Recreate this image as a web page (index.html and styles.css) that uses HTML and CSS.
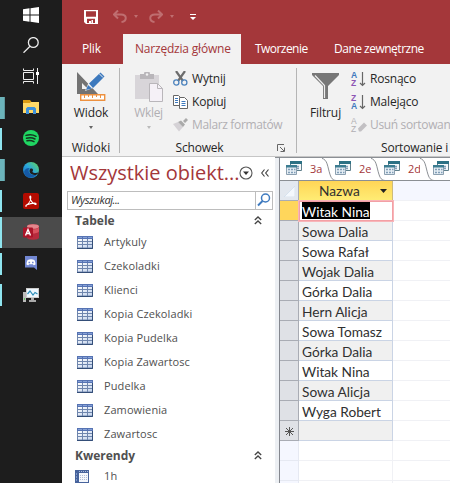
FILE: index.html
```html
<!DOCTYPE html>
<html lang="pl">
<head>
<meta charset="utf-8">
<title>Access</title>
<link rel="stylesheet" href="styles.css">
</head>
<body>
<svg width="0" height="0" class="defs">
  <defs>
    <linearGradient id="tg" x1="0" y1="0" x2="1" y2="1"><stop offset="0" stop-color="#fff"/><stop offset="1" stop-color="#c3d3ec"/></linearGradient>
    <linearGradient id="eg" x1="0" y1="1" x2="1" y2="0"><stop offset="0" stop-color="#1267b8"/><stop offset=".5" stop-color="#2ba6dd"/><stop offset="1" stop-color="#66dc55"/></linearGradient>
    <symbol id="table" viewBox="0 0 16 13"><rect width="16" height="13" fill="#6f86ae"/><rect width="16" height="3" fill="#5673b3"/><path d="M1 1.500h4M6 1.500h4M11 1.500h4" stroke="#86a1d6"/><path d="M1 3h4v2H1zM6 3h4v2H6zM11 3h4v2h-4zM1 6h4v2H1zM6 6h4v2H6zM11 6h4v2h-4zM1 9h4v2.500H1zM6 9h4v2.500H6zM11 9h4v2.500h-4z" fill="url(#tg)"/><path d="M0 12.500h15.500V3" fill="none" stroke="#344e78"/></symbol>
    <symbol id="query" viewBox="0 0 16 15"><path d="M4.500 .5h11v9h-11z" fill="#f4f8fa" stroke="#60808c"/><path d="M4 0h12v3H4z" fill="#2c7184"/><path d="M11 5.500h2M11 7.500h2" stroke="#819eb7" stroke-width="1.300"/><path d="M.5 4.500h10v9H.5z" fill="#e6eef4" stroke="#8ca0b0"/><path d="M0 4h11v2.500H0z" fill="#3c7d92"/><path d="M2 8.500h2M5 8.500h2M8 8.500h1.500M2 11.500h2M5 11.500h2M8 11.500h1.500" stroke="#819eb7" stroke-width="1.300"/></symbol>
    <symbol id="chev" viewBox="0 0 8 9"><path d="M.8 4 4 1l3.200 3M.8 8 4 5l3.200 3" fill="none" stroke="#444" stroke-width="1.300"/></symbol>
    <symbol id="az" viewBox="0 0 7 16"><path d="M3.500 1v13M1 12l2.500 2.500L6 12" fill="none" stroke="#666" stroke-width="1.200"/></symbol>
  </defs>
</svg>
<div class="screen">
  <nav class="taskbar">
    <div class="task"><svg width="16" height="16" viewBox="0 0 16 16" fill="#fff"><path d="M0 2.200 6.500 1.300v6.200H0zM7.500 1.200 16 0v7.500H7.500zM0 8.500h6.500v6.200L0 13.800zM7.500 8.500H16V16l-8.500-1.200z"/></svg></div>
    <div class="task"><svg width="16" height="16" viewBox="0 0 16 16" fill="none" stroke="#eee" stroke-width="1.300"><circle cx="10.300" cy="5.500" r="4.900"/><path d="M7 9.200.5 15.700"/></svg></div>
    <div class="task"><svg width="16" height="16" viewBox="0 0 16 16" fill="none" stroke="#eee"><path d="M.5.500v2h10v-2M.5 15.500v-2h10v2M.5 4.500h10v7H.5zM14.500 0v16"/><path d="M13 4h3v3h-3z" fill="#fff" stroke="none"/></svg></div>
    <div class="task open multi"><svg width="16" height="14" viewBox="0 0 16 14"><path d="M0 0h7l1.500 2v3H0z" fill="#dc9c14"/><path d="M0 3h7l1-1h8v11H0z" fill="#ffd968"/><path d="M3 14V8.500L4.500 7h7L13 8.500V14h-3v-4H6v4z" fill="#3e91db"/></svg></div>
    <div class="task open"><svg width="16" height="16" viewBox="0 0 16 16"><circle cx="8" cy="8" r="8" fill="#1fd662"/><path d="M3 5.400c3.500-1 7.200-.7 10 .9M3.500 8.200c3-.8 6-.5 8.500.8M4 10.800c2.500-.6 4.800-.3 7 .8" fill="none" stroke="#14351f" stroke-width="1.500" stroke-linecap="round"/></svg></div>
    <div class="task open multi"><svg width="16" height="16" viewBox="0 0 16 16"><circle cx="8" cy="8" r="8" fill="url(#eg)"/><path d="M6 6.500c-1.500 4 1.800 7.500 7.500 6.300C10 17.500 1 16 1.200 9.500 2 6.500 5 5.500 7.500 6z" fill="#1559a5"/><path d="M7.200 6.800c1.500-.6 2.800 0 2.800 1.200 0 1-.8 1.500-.5 2.100 1 1.200 4.500 1.300 6 .2-.7 1.800-2 2.500-2.800 2.600-5 .5-7.500-3-5.500-6.100z" fill="#1e1e1e"/></svg></div>
    <div class="task open"><svg width="16" height="16" viewBox="0 0 16 16"><rect width="16" height="16" rx="2" fill="#b30b00"/><path d="M3 12.500c2.500-1.500 5-5 4.800-8.200 0-1.800-1.300-1.400-.9.300C7.500 7.500 9.500 10 12 11.300c1.500.6 1.700-1.100-.2-1.200-2.800 0-5.500.5-7.800 1.600-1.200.7-1.500 1.500-1 1.600z" fill="none" stroke="#fff" stroke-width="1.100"/></svg></div>
    <div class="task open active"><svg width="16" height="16" viewBox="0 0 16 16"><path d="M4 2.500C4 -.5 16 -.5 16 2.500v11c0 3-12 3-12 0z" fill="#b52a3d"/><ellipse cx="10" cy="2.500" rx="6" ry="2.300" fill="#e4868c"/><path d="M9 5.500c3 0 6-.7 7-2v4c-1 1.500-4 2-7 2z" fill="#d8515e"/><rect y="3.500" width="10" height="10" rx="1" fill="#ab1429"/><path d="M2.500 11.500 5 5.500l2.500 6M3.500 9.500h3" fill="none" stroke="#fff" stroke-width="1.400"/></svg></div>
    <div class="task open"><svg width="12" height="14" viewBox="0 0 12 14"><path d="M0 0h12v14l-3-2.500H0z" fill="#7287d2"/><path d="M1.500 8.500c0-2 .5-3.500 1.200-4.500 2-1 4.600-1 6.600 0 .7 1 1.200 2.500 1.200 4.500-2 1.200-2 .6-2.500-.3H4c-.5.900-.5 1.500-2.500.3z" fill="#fff"/><path d="M3.500 5.700h1.600v1.600H3.500zM7 5.700h1.600v1.600H7z" fill="#7287d2"/></svg></div>
    <div class="task open"><svg width="16" height="16" viewBox="0 0 16 16"><path d="M0 5h3v10H0z" fill="#bbb"/><path d="M1 11h1v2H1z" fill="#5cc85c"/><path d="M3 1h13v10H3z" fill="#ccc"/><path d="M4 2h11v8H4z" fill="#eef8ff"/><path d="m4.500 7 2.500-3 3 4 2-2.500 2.500 1.500" fill="none" stroke="#2e8fba" stroke-width="1.200"/><path d="M8 11h3v2h2v2H6v-2h2z" fill="#aaa"/></svg></div>
  </nav>
  <main class="app">
    <header class="title">
      <svg class="save" width="14" height="14" viewBox="0 0 14 14"><path d="M0 0h14v14H2l-2-2z" fill="#fff"/><path d="M2 1.200h10v5.600H2zM3 8.800h8V13H9v-3H7.500v3H3z" fill="#a4373a"/><path d="M5 11h2v2H5z" fill="#fff"/></svg>
      <svg class="undo" width="14" height="13" viewBox="0 0 14 13" fill="none" stroke="#bf6e70" stroke-width="2"><path d="M5 .5.9 4.500 5 8.500M1.500 4.500H8c6.500 0 6 7 .5 7.500"/></svg>
      <i class="drop faint"></i>
      <svg class="redo" width="14" height="13" viewBox="0 0 14 13" fill="none" stroke="#bf6e70" stroke-width="2"><path d="m9 .5 4.100 4L9 8.500M12.500 4.500H6C-.5 4.500 0 11.500 5.500 12"/></svg>
      <i class="drop faint"></i>
      <svg class="more" width="6" height="6" viewBox="0 0 6 6" fill="#fff"><path d="M0 0h6v1H0zM0 3h6L3 6z"/></svg>
    </header>
    <div class="tabs"><span class="tab file">Plik</span><span class="tab on">Narzędzia główne</span><span class="tab create">Tworzenie</span><span class="tab data">Dane zewnętrzne</span></div>
    <section class="ribbon">
      <div class="group views">
        <div class="big"><svg width="31" height="30" viewBox="0 0 31 30"><path d="M1 1v22h21zM6 12l6 6H6z" fill="#737373" fill-rule="evenodd"/><path d="m9 20 3-7L26 0l5 4-14 13z" fill="#f2f2f2"/><path d="m10 19 2-5 4 3.500zM13 12.500 24.500 1.500l4 4L17 17z" fill="#3d79bd"/><path d="m23 2.500 4 4" stroke="#f2f2f2"/><path d="M4.700 23.700h24v5.600h-24z" fill="#fff" stroke="#ed9140" stroke-width="1.400"/><path d="M8.500 24v3M12.500 24v2M16.500 24v3M20.500 24v2M24.500 24v3" stroke="#ed9140"/></svg><span>Widok</span><i class="drop"></i></div>
        <div class="caption">Widoki</div>
      </div>
      <div class="group clip">
        <div class="tools">
          <div class="big off"><svg width="28" height="30" viewBox="0 0 28 30"><path d="M0 3h24v24H0z" fill="#d8d5d9"/><path d="M5 2h4a3 3 0 0 1 6 0h4v5H5z" fill="#b9b6ba"/><circle cx="12" cy="2.500" r="1.200" fill="#f2f2f2"/><path d="M14.500 11.500h8l5 5v13h-13z" fill="#f5f1f7" stroke="#b9b6ba"/><path d="M22.500 11.500v5h5" fill="none" stroke="#b9b6ba"/></svg><span>Wklej</span><i class="drop"></i></div>
          <ul class="cmds">
            <li><svg width="15" height="15" viewBox="0 0 15 15" fill="none"><path d="M3 0l7 10M12 0 5 10" stroke="#6d6d6d" stroke-width="2.200"/><circle cx="3.300" cy="11.500" r="2.600" stroke="#4c83bd" stroke-width="1.300"/><circle cx="11.300" cy="11.500" r="2.600" stroke="#4c83bd" stroke-width="1.300"/></svg><span>Wytnij</span></li>
            <li><svg width="15" height="14" viewBox="0 0 15 14" fill="#fff" stroke="#666"><path d="M.5.500h5l2 2v8h-7z"/><path d="M6.500 2.500h5l3 3v8h-8z"/><path d="M2 3.500h3M2 5.500h3M2 7.500h3M8.500 6.500h4M8.500 8.500h4M8.500 10.500h4" stroke="#3d79bd"/></svg><span>Kopiuj</span></li>
            <li class="off"><svg width="15" height="14" viewBox="0 0 15 14"><path d="m0 6 5-2 5 5-4 4.500z" fill="#d5d2d6"/><path d="m5 4 3-1.500 4 4L10 9zM10 3l3-3 2 2-3 3z" fill="#aaa"/></svg><span>Malarz formatów</span></li>
          </ul>
        </div>
        <div class="caption">Schowek<svg class="launch" width="8" height="8" viewBox="0 0 8 8" fill="none" stroke="#666"><path d="M.5 7V.5H7M3 3l4 4M7.500 3.500v4h-4"/></svg></div>
      </div>
      <div class="group sort">
        <div class="tools">
          <div class="big"><svg width="28" height="30" viewBox="0 0 28 30"><path d="M0 1h27v2L16 14v13h-5V14L0 3z" fill="#777"/><path d="m3 3.500 9.500 10V26" fill="none" stroke="#eee" stroke-width="1.200"/></svg><span>Filtruj</span></div>
          <ul class="cmds">
            <li><b class="az"><em class="a">A</em><em class="z">Z</em></b><svg class="arrow" width="7" height="16"><use href="#az"/></svg><span>Rosnąco</span></li>
            <li><b class="az"><em class="z">Z</em><em class="a">A</em></b><svg class="arrow" width="7" height="16"><use href="#az"/></svg><span>Malejąco</span></li>
            <li class="off"><b class="az"><em>A</em><em>Z</em></b><svg class="eraser" width="9" height="16" viewBox="0 0 9 16"><path d="m0 11.500 6-6 3 3-6 6H1z" fill="#c2c0c3"/></svg><span>Usuń sortowanie</span></li>
          </ul>
        </div>
        <div class="caption">Sortowanie i filtrowanie</div>
      </div>
    </section>
    <section class="work">
      <aside class="pane">
        <div class="panehead"><h1>Wszystkie obiekt...</h1><svg width="14" height="14" viewBox="0 0 14 14"><circle cx="7" cy="7" r="6" fill="#fff" stroke="#555" stroke-width="1.100"/><path d="M4 5.500h6L7 9z" fill="#333"/></svg><svg class="fold" width="8" height="8" viewBox="0 0 8 8" fill="none" stroke="#444" stroke-width="1.200"><path d="M3.500.500.700 4l2.800 3.500M7.500.500 4.700 4l2.800 3.500"/></svg></div>
        <div class="search"><span>Wyszukaj...</span><div><svg width="14" height="14" viewBox="0 0 14 14" fill="none"><circle cx="8.500" cy="5" r="4" stroke="#3e7abf" stroke-width="1.500"/><path d="M5.500 8 1 12.500" stroke="#3e7abf" stroke-width="2"/></svg></div></div>
        <h2>Tabele<svg width="8" height="9"><use href="#chev"/></svg></h2>
        <ul class="objects">
          <li><svg width="16" height="13"><use href="#table"/></svg><span>Artykuly</span></li>
          <li><svg width="16" height="13"><use href="#table"/></svg><span>Czekoladki</span></li>
          <li><svg width="16" height="13"><use href="#table"/></svg><span>Klienci</span></li>
          <li><svg width="16" height="13"><use href="#table"/></svg><span>Kopia Czekoladki</span></li>
          <li><svg width="16" height="13"><use href="#table"/></svg><span>Kopia Pudelka</span></li>
          <li><svg width="16" height="13"><use href="#table"/></svg><span>Kopia Zawartosc</span></li>
          <li><svg width="16" height="13"><use href="#table"/></svg><span>Pudelka</span></li>
          <li><svg width="16" height="13"><use href="#table"/></svg><span>Zamowienia</span></li>
          <li><svg width="16" height="13"><use href="#table"/></svg><span>Zawartosc</span></li>
        </ul>
        <h2 class="second">Kwerendy<svg width="8" height="9"><use href="#chev"/></svg></h2>
        <ul class="objects queries"><li><svg width="14" height="13" viewBox="0 0 14 13"><path d="M0 0h14v13H0z" fill="#47639c"/><path d="M4 3h9v9H4z" fill="#f4f7fc"/><path d="M4 1.500h10" stroke="#a9bbdf" stroke-dasharray="1 1"/><path d="M1.500 3v8" stroke="#7d97c8" stroke-dasharray="2 1"/><path d="M5 5.500h7M5 7.500h7M5 9.500h7" stroke="#aebcd8" stroke-dasharray="1 1"/></svg><span>1h</span></li></ul>
      </aside>
      <div class="split"></div>
      <article class="doc">
        <div class="doctabs">
          <div class="doctab"><svg width="16" height="15"><use href="#query"/></svg><span>3a</span><svg class="edge" width="14" height="24" viewBox="0 0 14 24"><path d="M0 1C5 1 5 5 7 13s3 10 7 10V24H0z" fill="#fff"/><path d="M-7 .5C4 .5 4.500 4 6.500 12s3 11 7.500 11.500" fill="none" stroke="#8b8f94"/></svg></div>
          <div class="doctab"><svg width="16" height="15"><use href="#query"/></svg><span>2e</span><svg class="edge" width="14" height="24" viewBox="0 0 14 24"><path d="M0 1C5 1 5 5 7 13s3 10 7 10V24H0z" fill="#fff"/><path d="M-7 .5C4 .5 4.500 4 6.500 12s3 11 7.500 11.500" fill="none" stroke="#8b8f94"/></svg></div>
          <div class="doctab"><svg width="16" height="15"><use href="#query"/></svg><span>2d</span><svg class="edge" width="14" height="24" viewBox="0 0 14 24"><path d="M0 1C5 1 5 5 7 13s3 10 7 10V24H0z" fill="#fff"/><path d="M-7 .5C4 .5 4.500 4 6.500 12s3 11 7.500 11.500" fill="none" stroke="#8b8f94"/></svg></div>
          <div class="doctab"><svg width="16" height="15"><use href="#query"/></svg></div>
        </div>
        <div class="sheet">
          <div class="row head"><i class="sel"><svg width="11" height="11" viewBox="0 0 11 11"><path d="M11 0v11H0z" fill="#f4f8fd" stroke="#c9d8ea" stroke-width=".6"/></svg></i><span class="cell">Nazwa<svg width="7" height="4" viewBox="0 0 7 4"><path d="M0 0h7L3.500 4z" fill="#222"/></svg></span><i class="rest"></i></div>
          <div class="row current"><i class="sel"></i><span class="cell"><mark>Witak Nina</mark></span><i class="rest"></i></div>
          <div class="row alt"><i class="sel"></i><span class="cell">Sowa Dalia</span><i class="rest"></i></div>
          <div class="row"><i class="sel"></i><span class="cell">Sowa Rafał</span><i class="rest"></i></div>
          <div class="row alt"><i class="sel"></i><span class="cell">Wojak Dalia</span><i class="rest"></i></div>
          <div class="row"><i class="sel"></i><span class="cell">Górka Dalia</span><i class="rest"></i></div>
          <div class="row alt"><i class="sel"></i><span class="cell">Hern Alicja</span><i class="rest"></i></div>
          <div class="row"><i class="sel"></i><span class="cell">Sowa Tomasz</span><i class="rest"></i></div>
          <div class="row alt"><i class="sel"></i><span class="cell">Górka Dalia</span><i class="rest"></i></div>
          <div class="row"><i class="sel"></i><span class="cell">Witak Nina</span><i class="rest"></i></div>
          <div class="row alt"><i class="sel"></i><span class="cell">Sowa Alicja</span><i class="rest"></i></div>
          <div class="row"><i class="sel"></i><span class="cell">Wyga Robert</span><i class="rest"></i></div>
          <div class="row alt new"><i class="sel"><svg width="9" height="9" viewBox="0 0 9 9" stroke="#555"><path d="M4.500 0v9M0 4.500h9M1 1l7 7M8 1 1 8"/></svg></i><span class="cell"></span><i class="rest"></i></div>
          <div class="row empty"><i class="sel"></i><span class="cell"></span><i class="rest"></i></div>
          <div class="row empty"><i class="sel"></i><span class="cell"></span><i class="rest"></i></div>
          <div class="row empty"><i class="sel"></i><span class="cell"></span><i class="rest"></i></div>
        </div>
      </article>
    </section>
  </main>
</div>
</body>
</html>
```
FILE: styles.css
```css
* { box-sizing: border-box; }
body { margin: 0; font: 12px/16px "Open Sans", "Noto Sans", sans-serif; color: #262626; overflow: hidden; }
ul { list-style: none; margin: 0; padding: 0; }
h1, h2 { margin: 0; }
svg { display: block; flex: none; }
.defs { position: absolute; }
.screen { display: flex; width: 450px; height: 483px; overflow: hidden; }

.taskbar { width: 62px; flex: none; background: #1d1d1d; }
.task { height: 31.25px; display: flex; align-items: center; justify-content: center; position: relative; }
.task:nth-child(-n+3) { height: 30.500px; }
.task:nth-child(-n+3) svg { margin-top: -1px; }
.open::before { content: ""; position: absolute; left: 0; top: 5px; width: 2px; height: 22px; background: #8fe5ef; }
.multi::before { width: 4px; background: #6cb4bb; border-right: 1px solid #5d969c; }
.active { background: #4b4b4b; }
.active::before { top: 0; height: 31px; }

.app { width: 388px; flex: none; display: flex; flex-direction: column; background: #f2f2f2; }
.title { height: 34px; background: #a4373a; display: flex; padding-left: 22px; align-items: flex-start; }
.save { margin-top: 10px; }
.undo { margin: 10px 7px 0 15px; }
.redo { margin: 10px 7px 0 11px; }
.more { margin: 14px 0 0 16px; }
.drop { border: solid transparent; border-width: 3px 2.500px 0; border-top-color: #666; width: 0; }
.faint { border-top-color: #bf6e70; margin-top: 15px; }
.tabs { height: 30px; background: #a4373a; display: flex; color: #fff; line-height: 29px; letter-spacing: -.2px; white-space: nowrap; }
.file { width: 61px; padding-left: 20px; }
.on { width: 118px; padding-left: 12px; background: #f2f2f2; color: #a4373a; }
.create { padding-left: 14px; width: 93px; letter-spacing: -.6px; }
.create { letter-spacing: -.55px; }
.data { flex: 1; letter-spacing: -.5px; }

.ribbon { height: 93px; display: flex; border-bottom: 1px solid #c6c6c6; overflow: hidden; }
.group { display: flex; flex-direction: column; flex: none; position: relative; white-space: nowrap; }
.group::after { content: ""; position: absolute; right: 0; top: 4px; bottom: 3px; width: 1px; background: #b5b5b5; }
.views { width: 58px; }
.clip { width: 177px; }
.sort { width: 230px; }
.tools { display: flex; height: 77px; }
.big { height: 77px; display: flex; flex-direction: column; align-items: center; padding-top: 7px; letter-spacing: -.1px; }
.big span { margin-top: 4px; }
.big .drop { margin-top: 5px; }
.views .big { padding-top: 7px; }
.clip .big { width: 57px; padding-top: 8px; }
.clip .big span { margin-top: 3px; }
.sort .big { width: 57px; padding-top: 8px; }
.sort .big span { margin-top: 3px; }
.off { color: #b1afb2; }
.off .drop { border-top-color: #bbb; }
.cmds { padding-top: 3px; }
.clip .cmds { margin-left: -4px; }
.sort .cmds { margin-left: -3px; }
.cmds li { height: 23px; display: flex; align-items: center; letter-spacing: -.2px; }
.clip li span { margin-left: 4px; }
.clip .off span { letter-spacing: -.35px; }
.sort li span { margin-left: 4px; }
.sort .off span { margin-left: 3px; letter-spacing: -.35px; }
.az { width: 7px; display: flex; flex-direction: column; font: bold 8.500px/8px "Liberation Sans", sans-serif; letter-spacing: 0; }
.az em { font-style: normal; }
.a { color: #3d79bd; }
.z { color: #8d55b4; }
.sort .off .az { font-weight: 400; }
.arrow { margin-left: 1px; }
.eraser { margin: 0; }
.caption { text-align: center; line-height: 13px; position: relative; }
.views .caption { letter-spacing: .1px; }
.clip .caption { padding-right: 18px; letter-spacing: -.2px; }
.sort .caption { text-align: left; padding-left: 84px; letter-spacing: -.2px; }
.launch { position: absolute; right: 12px; top: 3px; }

.work { flex: 1; display: flex; min-height: 0; }
.pane { width: 213px; flex: none; background: #fff; color: #505050; }
.panehead { height: 34px; display: flex; align-items: center; padding: 0 0 2px 8px; }
h1 { width: 169px; font-size: 20px; line-height: 30px; font-weight: 400; color: #a4373a; letter-spacing: -.03px; white-space: nowrap; }
.fold { margin-left: 8px; }
.search { height: 19px; margin: 0 2px 0 5px; border: 1px solid #bdbdbd; display: flex; justify-content: space-between; font-size: 11px; font-style: italic; letter-spacing: -.4px; padding-left: 3px; color: #333; }
.search div { width: 17px; border-left: 1px solid #bdbdbd; padding: 1px; }
h2 { height: 20px; padding: 1px 13px 0 13px; display: flex; justify-content: space-between; align-items: center; font-size: 12px; line-height: 20px; }
.objects li { height: 24px; display: flex; align-items: center; padding-left: 15px; font-size: 11px; }
.objects span { margin-left: 11px; letter-spacing: .1px; }
.second { margin-top: -1px; }
.queries li { padding-left: 13px; height: 22px; }
.queries span { margin-left: 15px; }
.split { width: 4px; background: #eceff3; border-top: 1px solid #8b8f94; }

.doc { flex: 1; min-width: 0; overflow: hidden; background: #fff; border-left: 1px solid #85888f; }
.doctabs { height: 24px; display: flex; background: #e9ebee; border-bottom: 1px solid #8b8f94; overflow: hidden; }
.doctab { width: 49px; height: 24px; flex: none; display: flex; position: relative; padding: 3px 0 0 6px; background: #fff; border-top: 1px solid #8b8f94; color: #a4373a; font-size: 11px; }
.doctab span { margin-left: 8px; }
.edge { position: absolute; left: 42px; top: -1px; z-index: 1; }
.sheet { font: 13.700px/21px Lato, sans-serif; color: #303030; }
.row { height: 20px; display: flex; }
.sel { width: 19px; flex: none; background: #dfe1e6; border-right: 1px solid #a9acb4; border-bottom: 1px solid #a9acb4; }
.cell { width: 94px; flex: none; padding-left: 3px; border-right: 1px solid #cad4e5; border-bottom: 1px solid #cad4e5; white-space: nowrap; }
.rest { flex: 1; border-bottom: 1px solid #f0f1f5; }
.alt .cell { background: #f0f0f0; }
.head .sel { background: #e3e8ef; padding: 5px 0 0 4px; }
.head .cell { display: flex; align-items: center; padding: 0 5px 0 20px; justify-content: space-between; background: linear-gradient(#ffd556, #ffec74); border-color: #cdbb7c; line-height: 18px; }
.head .rest { background: #f5f7ff; }
.current .sel { background: #ffd65b; }
.current .cell { position: relative; border: 1px solid #f3a0a5; box-shadow: 0 0 0 1px #f8b5b9; padding-left: 2px; line-height: 19px; }
mark { display: inline-block; height: 17px; background: #000; color: #fff; }
.new .sel { padding: 6px 0 0 5px; }
.empty .sel { background: #f5f7ff; border-color: #e6e9f2; }
.empty .cell { border-color: #f0f1f5; }
```
